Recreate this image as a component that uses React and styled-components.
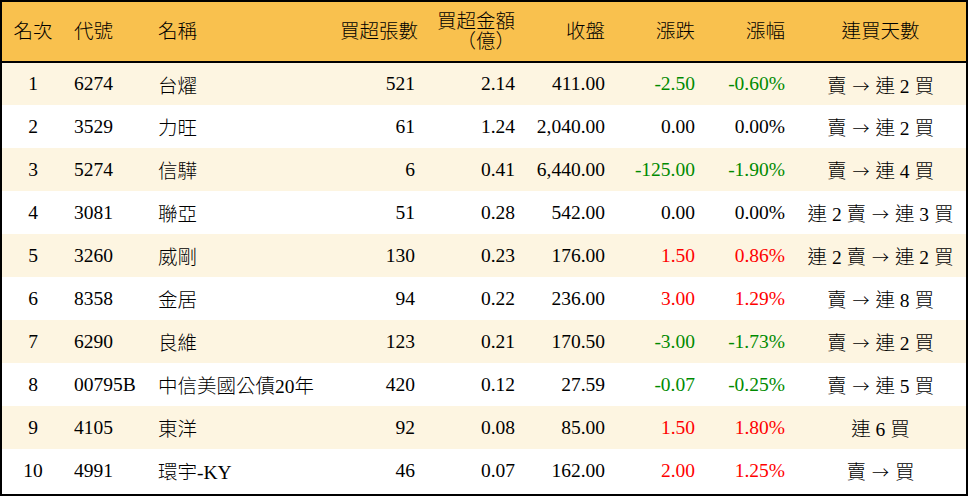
import React from "react";
import styled, { createGlobalStyle } from "styled-components";

const rows = [
  { rank: 1, code: "6274", name: "台燿", lots: "521", amount: "2.14", close: "411.00", change: "-2.50", pct: "-0.60%", streak: "賣 → 連 2 買" },
  { rank: 2, code: "3529", name: "力旺", lots: "61", amount: "1.24", close: "2,040.00", change: "0.00", pct: "0.00%", streak: "賣 → 連 2 買" },
  { rank: 3, code: "5274", name: "信驊", lots: "6", amount: "0.41", close: "6,440.00", change: "-125.00", pct: "-1.90%", streak: "賣 → 連 4 買" },
  { rank: 4, code: "3081", name: "聯亞", lots: "51", amount: "0.28", close: "542.00", change: "0.00", pct: "0.00%", streak: "連 2 賣 → 連 3 買" },
  { rank: 5, code: "3260", name: "威剛", lots: "130", amount: "0.23", close: "176.00", change: "1.50", pct: "0.86%", streak: "連 2 賣 → 連 2 買" },
  { rank: 6, code: "8358", name: "金居", lots: "94", amount: "0.22", close: "236.00", change: "3.00", pct: "1.29%", streak: "賣 → 連 8 買" },
  { rank: 7, code: "6290", name: "良維", lots: "123", amount: "0.21", close: "170.50", change: "-3.00", pct: "-1.73%", streak: "賣 → 連 2 買" },
  { rank: 8, code: "00795B", name: "中信美國公債20年", lots: "420", amount: "0.12", close: "27.59", change: "-0.07", pct: "-0.25%", streak: "賣 → 連 5 買" },
  { rank: 9, code: "4105", name: "東洋", lots: "92", amount: "0.08", close: "85.00", change: "1.50", pct: "1.80%", streak: "連 6 買" },
  { rank: 10, code: "4991", name: "環宇-KY", lots: "46", amount: "0.07", close: "162.00", change: "2.00", pct: "1.25%", streak: "賣 → 買" },
];

const toneOf = (v) => {
  const n = parseFloat(v);
  if (n > 0) return "up";
  if (n < 0) return "down";
  return "flat";
};

const toneColor = {
  up: "#ff0000",
  down: "#008a00",
  flat: "#000000",
};

const GlobalStyle = createGlobalStyle`
  html, body {
    margin: 0;
    padding: 0;
    background: #ffffff;
  }
  body {
    font-family: "Liberation Serif", "Noto Sans CJK TC", serif;
    color: #000;
  }
`;

const Frame = styled.div`
  width: 968px;
  height: 496px;
  box-sizing: border-box;
  border: 2px solid #000;
  overflow: hidden;
`;

const Table = styled.table`
  width: 100%;
  border-collapse: collapse;
  table-layout: fixed;
  font-size: 19.5px;
  font-weight: 300;
`;

const HeadRow = styled.tr`
  background: #f9c14e;
  height: 60px;
  border-bottom: 2px solid #000;
`;

const Th = styled.th`
  font-weight: 300;
  padding: 0 10px;
  line-height: 20px;
  text-align: ${(p) => p.$align || "left"};
  vertical-align: middle;
  white-space: nowrap;
`;

const Row = styled.tr`
  height: 43px;
  background: ${(p) => (p.$shade ? "#fdf5e1" : "#ffffff")};
`;

const Td = styled.td`
  padding: 0 10px;
  text-align: ${(p) => p.$align || "left"};
  color: ${(p) => toneColor[p.$tone || "flat"]};
  white-space: nowrap;
  vertical-align: middle;
`;

const Arrow = styled.span`
  font-family: "Noto Sans CJK TC", sans-serif;
  font-weight: 300;
  font-size: 17px;
  margin: 0 1px;
`;

const Streak = ({ text }) => {
  const parts = text.split("→");
  return (
    <>
      {parts.map((p, i) => (
        <React.Fragment key={i}>
          {i > 0 && <Arrow>→</Arrow>}
          {p}
        </React.Fragment>
      ))}
    </>
  );
};

const cols = [62, 84, 182, 95, 100, 90, 90, 90, 171];

export default function App() {
  return (
    <>
      <GlobalStyle />
      <Frame>
        <Table>
          <colgroup>
            {cols.map((w, i) => (
              <col key={i} style={{ width: w }} />
            ))}
          </colgroup>
          <thead>
            <HeadRow>
              <Th $align="center">名次</Th>
              <Th>代號</Th>
              <Th>名稱</Th>
              <Th $align="right">買超張數</Th>
              <Th $align="right">
                買超金額
                <br />
                （億）
              </Th>
              <Th $align="right">收盤</Th>
              <Th $align="right">漲跌</Th>
              <Th $align="right">漲幅</Th>
              <Th $align="center">連買天數</Th>
            </HeadRow>
          </thead>
          <tbody>
            {rows.map((r, i) => (
              <Row key={r.rank} $shade={i % 2 === 0}>
                <Td $align="center">{r.rank}</Td>
                <Td>{r.code}</Td>
                <Td>{r.name}</Td>
                <Td $align="right">{r.lots}</Td>
                <Td $align="right">{r.amount}</Td>
                <Td $align="right">{r.close}</Td>
                <Td $align="right" $tone={toneOf(r.change)}>{r.change}</Td>
                <Td $align="right" $tone={toneOf(r.pct)}>{r.pct}</Td>
                <Td $align="center"><Streak text={r.streak} /></Td>
              </Row>
            ))}
          </tbody>
        </Table>
      </Frame>
    </>
  );
}
